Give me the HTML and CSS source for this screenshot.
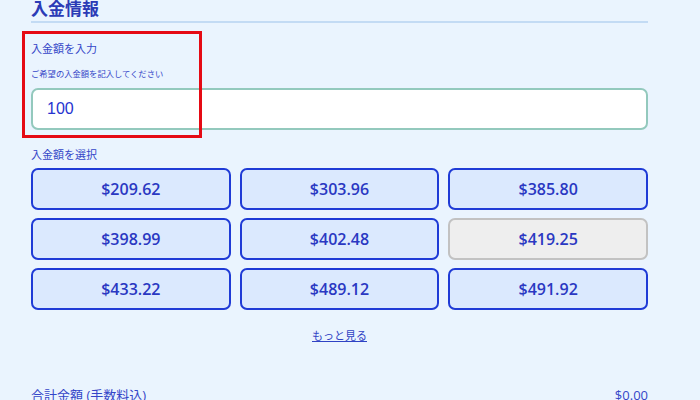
FILE: index.html
```html
<!DOCTYPE html>
<html lang="ja">
<head>
  <meta charset="UTF-8" />
  <meta name="viewport" content="width=device-width, initial-scale=1.0" />
  <title>入金情報</title>
  <link rel="stylesheet" href="styles.css">
</head>
<body>
  <div class="container">
    <h2 class="section-title">入金情報</h2>

    <div class="field">
      <div class="highlight"></div>
      <label class="field-label" for="amount">入金額を入力</label>
      <div class="field-hint">ご希望の入金額を記入してください</div>
      <input class="amount-input" id="amount" type="text" value="100" />
    </div>

    <div class="field-label select-label">入金額を選択</div>
    <div class="amount-grid">
      <button class="amount-btn">$209.62</button>
      <button class="amount-btn">$303.96</button>
      <button class="amount-btn">$385.80</button>
      <button class="amount-btn">$398.99</button>
      <button class="amount-btn">$402.48</button>
      <button class="amount-btn" disabled>$419.25</button>
      <button class="amount-btn">$433.22</button>
      <button class="amount-btn">$489.12</button>
      <button class="amount-btn">$491.92</button>
    </div>

    <div class="more">
      <a href="#">もっと見る</a>
    </div>

    <div class="total">
      <span>合計金額 (手数料込)</span>
      <span>$0.00</span>
    </div>
  </div>
</body>
</html>
```

FILE: styles.css
```css
body {
  margin: 0;
  background: #eaf4fe;
  font-family: "Open Sans", "Noto Sans CJK JP", sans-serif;
  color: #2f42c4;
}
.container {
  padding: 0 52px 0 31px;
}
.section-title {
  margin: -1px 0 0;
  font-size: 17px;
  line-height: 20px;
  font-weight: bold;
  color: #2b3bb6;
  padding-bottom: 2px;
  border-bottom: 2px solid #c3dbf4;
}
.field {
  position: relative;
  padding-top: 18px;
}
.highlight {
  position: absolute;
  left: -9px;
  top: 8px;
  width: 174px;
  height: 101px;
  border: 3px solid #e50a14;
  pointer-events: none;
}
.field-label {
  display: block;
  font-size: 11px;
  line-height: 16px;
  color: #3446c8;
}
.field-hint {
  margin-top: 11px;
  font-size: 8.3px;
  line-height: 12px;
  color: #3446c8;
}
.amount-input {
  display: block;
  box-sizing: border-box;
  width: 100%;
  height: 42px;
  margin-top: 8px;
  padding: 0 14px;
  border: 2px solid #93c9bd;
  border-radius: 7px;
  background: #fff;
  font-family: "Liberation Sans", sans-serif;
  font-size: 16px;
  color: #2634d0;
  outline: none;
}
.select-label {
  margin-top: 17px;
}
.amount-grid {
  display: grid;
  grid-template-columns: repeat(3, 1fr);
  grid-auto-rows: 42px;
  gap: 8px 9px;
  margin-top: 5px;
}
.amount-btn {
  border: 2px solid #1f3bd6;
  border-radius: 7px;
  background: #dbe9fe;
  font-family: "Open Sans", sans-serif;
  font-size: 16px;
  font-weight: 600;
  color: #2a38c2;
  cursor: pointer;
}
.amount-btn:disabled {
  background: #eeeeee;
  border-color: #c2c2c2;
  color: #2a38c2;
  cursor: default;
}
.more {
  margin-top: 18px;
  text-align: center;
  font-size: 11px;
  line-height: 16px;
}
.more a {
  color: #2f42c4;
}
.total {
  display: flex;
  justify-content: space-between;
  margin-top: 42px;
  font-size: 13px;
  line-height: 18px;
  color: #3446c8;
}
```
